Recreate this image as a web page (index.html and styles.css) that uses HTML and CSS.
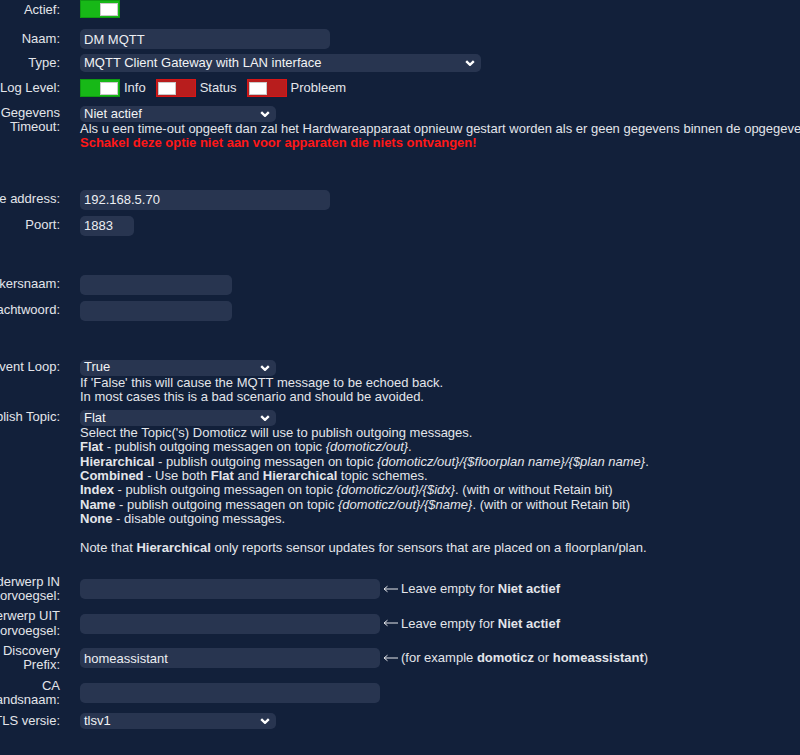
FILE: index.html
```html
<!DOCTYPE html>
<html lang="nl">
<head>
<meta charset="utf-8">
<title>Hardware - DM MQTT</title>
<link rel="stylesheet" href="styles.css">
</head>
<body>
<div class="form">
  <div class="row first">
    <div class="lbl">Actief:</div>
    <div class="field"><span class="switch on"><span class="knob"></span></span></div>
  </div>
  <div class="row r-naam">
    <div class="lbl">Naam:</div>
    <div class="field"><input class="inp w250" type="text" value="DM MQTT"></div>
  </div>
  <div class="row r-type">
    <div class="lbl">Type:</div>
    <div class="field"><div class="select w401 tall"><span>MQTT Client Gateway with LAN interface</span><svg class="chev" width="10" height="6" viewBox="0 0 10 6"><path d="M1.2 1.2L5 4.8 8.8 1.2" stroke="#fff" stroke-width="2.4" fill="none"/></svg></div></div>
  </div>
  <div class="row r-log">
    <div class="lbl">Log Level:</div>
    <div class="field opts">
      <span class="opt"><span class="switch on"><span class="knob"></span></span>Info</span>
      <span class="opt"><span class="switch off"><span class="knob"></span></span>Status</span>
      <span class="opt"><span class="switch off"><span class="knob"></span></span>Probleem</span>
    </div>
  </div>
  <div class="row top r-timeout">
    <div class="lbl">Gegevens<br>Timeout:</div>
    <div class="field col">
      <div class="select w196"><span>Niet actief</span><svg class="chev" width="10" height="6" viewBox="0 0 10 6"><path d="M1.2 1.2L5 4.8 8.8 1.2" stroke="#fff" stroke-width="2.4" fill="none"/></svg></div>
      <div class="desc nowrap">Als u een time-out opgeeft dan zal het Hardwareapparaat opnieuw gestart worden als er geen gegevens binnen de opgegeven tijd ontvangen worden.<br><span class="warn">Schakel deze optie niet aan voor apparaten die niets ontvangen!</span></div>
    </div>
  </div>
  <div class="row group">
    <div class="lbl">Remote address:</div>
    <div class="field"><input class="inp w250" type="text" value="192.168.5.70"></div>
  </div>
  <div class="row">
    <div class="lbl">Poort:</div>
    <div class="field"><input class="inp w54" type="text" value="1883"></div>
  </div>
  <div class="row group">
    <div class="lbl">Gebruikersnaam:</div>
    <div class="field"><input class="inp w152" type="text" value=""></div>
  </div>
  <div class="row">
    <div class="lbl">Wachtwoord:</div>
    <div class="field"><input class="inp w152" type="password" value=""></div>
  </div>
  <div class="row top group">
    <div class="lbl">Prevent Loop:</div>
    <div class="field col">
      <div class="select w196"><span>True</span><svg class="chev" width="10" height="6" viewBox="0 0 10 6"><path d="M1.2 1.2L5 4.8 8.8 1.2" stroke="#fff" stroke-width="2.4" fill="none"/></svg></div>
      <div class="desc">If 'False' this will cause the MQTT message to be echoed back.<br>In most cases this is a bad scenario and should be avoided.</div>
    </div>
  </div>
  <div class="row top">
    <div class="lbl">Publish Topic:</div>
    <div class="field col">
      <div class="select w196"><span>Flat</span><svg class="chev" width="10" height="6" viewBox="0 0 10 6"><path d="M1.2 1.2L5 4.8 8.8 1.2" stroke="#fff" stroke-width="2.4" fill="none"/></svg></div>
      <div class="desc">Select the Topic('s) Domoticz will use to publish outgoing messages.<br>
        <b>Flat</b> - publish outgoing messagen on topic <i>{domoticz/out}</i>.<br>
        <b>Hierarchical</b> - publish outgoing messagen on topic <i>{domoticz/out}/{$floorplan name}/{$plan name}</i>.<br>
        <b>Combined</b> - Use both <b>Flat</b> and <b>Hierarchical</b> topic schemes.<br>
        <b>Index</b> - publish outgoing messagen on topic <i>{domoticz/out}/{$idx}</i>. (with or without Retain bit)<br>
        <b>Name</b> - publish outgoing messagen on topic <i>{domoticz/out}/{$name}</i>. (with or without Retain bit)<br>
        <b>None</b> - disable outgoing messages.<br>
        <br>
        Note that <b>Hierarchical</b> only reports sensor updates for sensors that are placed on a floorplan/plan.</div>
    </div>
  </div>
  <div class="row r-after-note">
    <div class="lbl">Onderwerp IN<br>voorvoegsel:</div>
    <div class="field"><input class="inp w300" type="text" value=""><span class="note"><svg class="arrow" width="15" height="8" viewBox="0 0 15 8"><path d="M1 4H15M1 4L4.5 1.2M1 4L4.5 6.8" stroke="#e3e5ea" stroke-width="1" fill="none"/></svg>Leave empty for <b>Niet actief</b></span></div>
  </div>
  <div class="row">
    <div class="lbl">Onderwerp UIT<br>voorvoegsel:</div>
    <div class="field"><input class="inp w300" type="text" value=""><span class="note"><svg class="arrow" width="15" height="8" viewBox="0 0 15 8"><path d="M1 4H15M1 4L4.5 1.2M1 4L4.5 6.8" stroke="#e3e5ea" stroke-width="1" fill="none"/></svg>Leave empty for <b>Niet actief</b></span></div>
  </div>
  <div class="row">
    <div class="lbl">Discovery<br>Prefix:</div>
    <div class="field"><input class="inp w300" type="text" value="homeassistant"><span class="note"><svg class="arrow" width="15" height="8" viewBox="0 0 15 8"><path d="M1 4H15M1 4L4.5 1.2M1 4L4.5 6.8" stroke="#e3e5ea" stroke-width="1" fill="none"/></svg>(for example <b>domoticz</b> or <b>homeassistant</b>)</span></div>
  </div>
  <div class="row">
    <div class="lbl">CA<br>bestandsnaam:</div>
    <div class="field"><input class="inp w300" type="text" value=""></div>
  </div>
  <div class="row">
    <div class="lbl">TLS versie:</div>
    <div class="field"><div class="select w196"><span>tlsv1</span><svg class="chev" width="10" height="6" viewBox="0 0 10 6"><path d="M1.2 1.2L5 4.8 8.8 1.2" stroke="#fff" stroke-width="2.4" fill="none"/></svg></div></div>
  </div>
</div>
</body>
</html>
```

FILE: styles.css
```css
html, body {
  margin: 0;
  padding: 0;
  overflow: hidden;
  background: #12203a;
}

body {
  font-family: "Liberation Sans", Arial, sans-serif;
  font-size: 13px;
  line-height: 14.3px;
  color: #e3e5ea;
  height: 755px;
}

.form {
  margin-left: -60px;
}

.row {
  display: flex;
  align-items: center;
  margin-top: 6px;
}

.row.top {
  align-items: flex-start;
}

.row.first { margin-top: 0; }
.r-naam { margin-top: 11px; }
.r-type { margin-top: 5px; }
.r-log { margin-top: 7px; }
.r-timeout { margin-top: 9px; }
.row.group { margin-top: 39px; }
.r-after-note { margin-top: 20px; }

.lbl {
  flex: 0 0 120px;
  margin-right: 20px;
  text-align: right;
  white-space: nowrap;
}

.row.first .lbl {
  padding-top: 2px;
}

.field {
  display: flex;
  align-items: center;
  gap: 3px;
}

.field.col {
  flex-direction: column;
  align-items: flex-start;
  gap: 0;
}

.inp {
  box-sizing: border-box;
  height: 20px;
  border: none;
  border-radius: 5px;
  background: #283550;
  color: #eceef2;
  font-family: "Liberation Sans", Arial, sans-serif;
  font-size: 13px;
  padding: 0 4px;
  margin: 0;
  outline: none;
}

.w54 { width: 54px; }
.w152 { width: 152px; }
.w196 { width: 196px; }
.w250 { width: 250px; }
.w300 { width: 300px; }
.w401 { width: 401px; }

.select {
  box-sizing: border-box;
  height: 16px;
  display: flex;
  align-items: center;
  justify-content: space-between;
  background: #283550;
  border-radius: 5px;
  padding: 0 6px 0 4px;
  color: #f2f3f5;
  white-space: nowrap;
}

.select.tall {
  height: 18px;
}

.chev {
  flex: 0 0 auto;
  display: block;
}

.desc {
  line-height: 14.3px;
  color: #e3e5ea;
}

.nowrap {
  white-space: nowrap;
}

.warn {
  color: #ff1717;
  font-weight: bold;
}

.opts {
  gap: 10px;
}

.opt {
  display: inline-flex;
  align-items: center;
  gap: 4px;
}

.switch {
  box-sizing: border-box;
  display: inline-flex;
  align-items: center;
  width: 40px;
  height: 18px;
  padding: 0 1px;
  border: 1px solid;
}

.switch.on {
  background: #17b817;
  border-color: #0f9a12;
  justify-content: flex-end;
}

.switch.off {
  background: #b81d1d;
  border-color: #d81515;
  justify-content: flex-start;
}

.knob {
  box-sizing: border-box;
  width: 18px;
  height: 13px;
  background: #ffffff;
  border: 1px solid #c9c9c9;
}

.note {
  white-space: nowrap;
}

.arrow {
  display: inline-block;
  vertical-align: middle;
  margin: -2px 3px 0 0;
}
```
